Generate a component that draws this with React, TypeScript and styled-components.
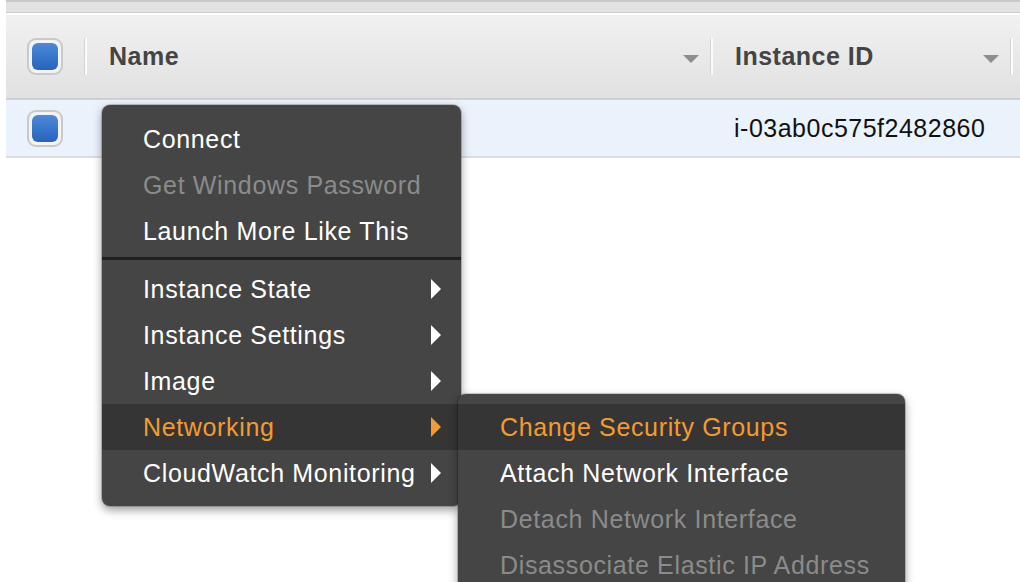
import React from 'react';
import styled, { createGlobalStyle } from 'styled-components';

type MenuItemKind = 'normal' | 'disabled' | 'active';

interface MenuEntry {
  label: string;
  kind?: MenuItemKind;
  submenu?: boolean;
  separatorBefore?: boolean;
}

const GlobalStyle = createGlobalStyle`
  html, body {
    margin: 0;
    padding: 0;
    background: #ffffff;
  }
  body {
    font-family: "Liberation Sans", Arial, Helvetica, sans-serif;
    -webkit-font-smoothing: antialiased;
  }
`;

const Page = styled.div`
  position: relative;
  width: 1020px;
  height: 582px;
  overflow: hidden;
  padding-left: 6px;
  box-sizing: border-box;
  background: #fff;
  letter-spacing: 0.5px;
`;

const TopStrip = styled.div`
  height: 10px;
  background: #e2e2e2;
  border-top: 2px solid #c8c8c8;
  border-bottom: 1px solid #c9c9c9;
  margin-bottom: 2px;
`;

const TableRow = styled.div<{ $header?: boolean }>`
  display: grid;
  grid-template-columns: 78px 626px 300px 1fr;
  height: ${p => (p.$header ? '83px' : '56px')};
  background: ${p => (p.$header ? 'linear-gradient(#f1f1f1, #e1e1e1)' : '#eaf2fc')};
  border-bottom: ${p => (p.$header ? '1px solid #cbcbcb' : '2px solid #dddddd')};
  border-top: ${p => (p.$header ? 'none' : '1px solid #d6d6d6')};
`;

const CheckCell = styled.div`
  display: flex;
  align-items: center;
  justify-content: center;
`;

const CheckBox = styled.div`
  width: 36px;
  height: 37px;
  box-sizing: border-box;
  border: 2px solid #c9c9c9;
  border-radius: 9px;
  background: #f3f3f3;
  padding: 3px;
  display: flex;
`;

const CheckFill = styled.div`
  flex: 1;
  border-radius: 6px;
  background: linear-gradient(#4b8ad9, #2862bd);
`;

const HeaderCell = styled.div`
  position: relative;
  display: flex;
  align-items: center;
  padding: 0 11px 0 25px;
  font-weight: 700;
  font-size: 25px;
  color: #444444;

  &::before {
    content: '';
    position: absolute;
    left: 0;
    top: 23px;
    width: 3px;
    height: 37px;
    background: linear-gradient(to right, #d4d4d4 34%, #fbfbfb 34%);
  }
`;

const HeaderLabel = styled.span`
  flex: 1;
`;

const SortCaret = styled.span`
  width: 0;
  height: 0;
  margin-top: 4px;
  border-left: 8px solid transparent;
  border-right: 8px solid transparent;
  border-top: 8px solid #8e8e8e;
`;

const DataCell = styled.div`
  display: flex;
  align-items: center;
  padding-left: 24px;
  font-size: 25px;
  color: #111111;
`;

const Menu = styled.div<{ $top: number; $left: number; $width: number }>`
  position: absolute;
  top: ${p => p.$top}px;
  left: ${p => p.$left}px;
  width: ${p => p.$width}px;
  padding: 11px 0 10px;
  box-sizing: border-box;
  background: #454545;
  border-radius: 8px;
  letter-spacing: 0.65px;
  box-shadow: 0 0 0 1px rgba(0, 0, 0, 0.18), 0 4px 10px rgba(0, 0, 0, 0.4);
  z-index: 2;
`;

const SubMenu = styled(Menu)`
  padding-top: 10px;
  z-index: 3;
`;

const Separator = styled.div`
  height: 12px;
  display: flex;
  align-items: center;

  &::after {
    content: '';
    flex: 1;
    height: 3px;
    margin-top: -3px;
    background: #1f1f1f;
  }
`;

const itemColors: Record<MenuItemKind, string> = {
  normal: '#ffffff',
  disabled: '#8b8b8b',
  active: '#f39b31',
};

const Item = styled.div<{ $kind: MenuItemKind; $indent: number }>`
  position: relative;
  height: 46px;
  display: flex;
  align-items: center;
  padding: 0 20px 0 ${p => p.$indent}px;
  font-size: 25px;
  white-space: nowrap;
  color: ${p => itemColors[p.$kind]};
  background: ${p => (p.$kind === 'active' ? '#353535' : 'transparent')};
`;

const ItemLabel = styled.span`
  flex: 1;
`;

const Arrow = styled.span<{ $color: string }>`
  width: 0;
  height: 0;
  border-top: 10px solid transparent;
  border-bottom: 10px solid transparent;
  border-left: 10px solid ${p => p.$color};
`;

const mainItems: MenuEntry[] = [
  { label: 'Connect' },
  { label: 'Get Windows Password', kind: 'disabled' },
  { label: 'Launch More Like This' },
  { label: 'Instance State', submenu: true, separatorBefore: true },
  { label: 'Instance Settings', submenu: true },
  { label: 'Image', submenu: true },
  { label: 'Networking', submenu: true, kind: 'active' },
  { label: 'CloudWatch Monitoring', submenu: true },
];

const networkingItems: MenuEntry[] = [
  { label: 'Change Security Groups', kind: 'active' },
  { label: 'Attach Network Interface' },
  { label: 'Detach Network Interface', kind: 'disabled' },
  { label: 'Disassociate Elastic IP Address', kind: 'disabled' },
];

const renderItems = (items: MenuEntry[], indent: number) =>
  items.map(item => {
    const kind = item.kind || 'normal';
    return (
      <React.Fragment key={item.label}>
        {item.separatorBefore && <Separator />}
        <Item $kind={kind} $indent={indent}>
          <ItemLabel>{item.label}</ItemLabel>
          {item.submenu && <Arrow $color={itemColors[kind]} />}
        </Item>
      </React.Fragment>
    );
  });

const Checkbox: React.FC = () => (
  <CheckCell>
    <CheckBox>
      <CheckFill />
    </CheckBox>
  </CheckCell>
);

export default function App() {
  return (
    <>
      <GlobalStyle />
      <Page>
        <TopStrip />
        <TableRow $header>
          <Checkbox />
          <HeaderCell>
            <HeaderLabel>Name</HeaderLabel>
            <SortCaret />
          </HeaderCell>
          <HeaderCell>
            <HeaderLabel>Instance ID</HeaderLabel>
            <SortCaret />
          </HeaderCell>
          <HeaderCell />
        </TableRow>
        <TableRow>
          <Checkbox />
          <DataCell />
          <DataCell>i-03ab0c575f2482860</DataCell>
          <DataCell />
        </TableRow>

        <Menu $top={105} $left={102} $width={359}>
          {renderItems(mainItems, 41)}
        </Menu>
        <SubMenu $top={394} $left={458} $width={447}>
          {renderItems(networkingItems, 42)}
        </SubMenu>
      </Page>
    </>
  );
}
